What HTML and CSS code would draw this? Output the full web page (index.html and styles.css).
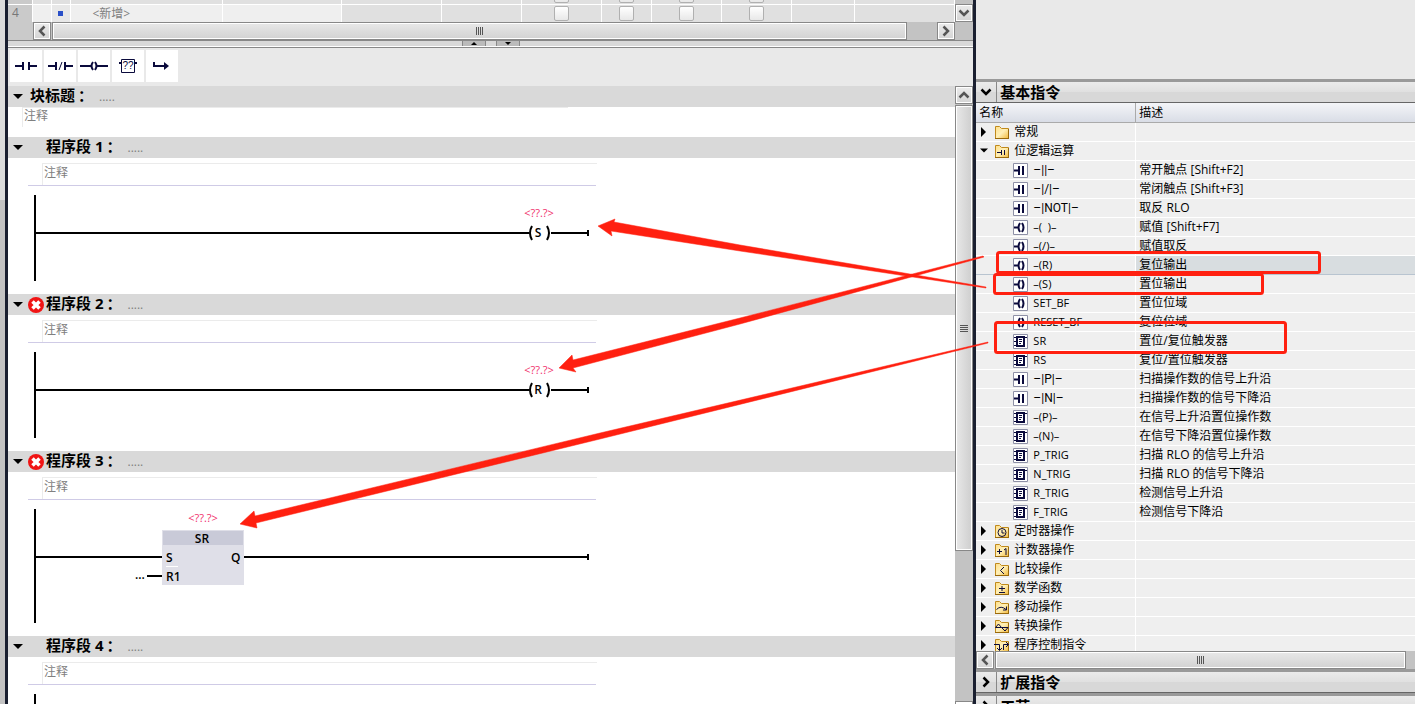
FILE: index.html
```html
<!DOCTYPE html>
<html lang="zh-CN">
<head>
    <meta charset="UTF-8">
    <meta name="viewport" content="width=device-width, initial-scale=1.0">
    <title>程序编辑器</title>
    <link rel="stylesheet" href="styles.css">
</head>
<body>
    <!-- shared icons -->
    <svg class="defs" aria-hidden="true">
        <defs>
            <linearGradient id="gold" x1="0" y1="0" x2="1" y2="1">
                <stop offset="0" stop-color="#ffdf8a"/>
                <stop offset="0.5" stop-color="#fff0b8"/>
                <stop offset="1" stop-color="#f2b93c"/>
            </linearGradient>
            <symbol id="folder" viewBox="0 0 16 15">
                <path d="M1.500 13.500V1.500H5.500L7.500 3.500H14.500V13.500Z" fill="url(#gold)" stroke="#c08a1c"/>
                <path d="M1 13.500H15M14.500 4V14" stroke="#99690c" fill="none"/>
            </symbol>
            <symbol id="contact" viewBox="0 0 15 15">
                <path d="M.5 .5H14.500V14.500H.5Z" fill="#fff" stroke="#8e90a6"/>
                <path d="M1 7.500H5M6 3V12M10 3V12" stroke="#0a0a3c" stroke-width="2" fill="none"/>
            </symbol>
            <symbol id="coil" viewBox="0 0 15 15">
                <path d="M.5 .5H14.500V14.500H.5Z" fill="#fff" stroke="#8e90a6"/>
                <path d="M1 7.500H5M7 3Q4 7.500 7 12M9 3Q12 7.500 9 12" stroke="#0a0a3c" stroke-width="2" fill="none"/>
            </symbol>
            <symbol id="block" viewBox="0 0 15 15">
                <path d="M.5 .5H14.500V14.500H.5Z" fill="#fff" stroke="#8e90a6"/>
                <path d="M4 3H11V12H4Z" stroke="#0a0a3c" stroke-width="2" fill="none"/>
                <path d="M1 3.500H4M1 7.500H4M1 11.500H4M11 3.500H14M6 5.500H9M6 7.500H9M6 9.500H8" stroke="#0a0a3c" fill="none"/>
            </symbol>
            <symbol id="left" viewBox="0 0 16 16"><path d="M10.500 3.500L6 8L10.500 12.500" fill="none" stroke="#555" stroke-width="2.500"/></symbol>
            <symbol id="right" viewBox="0 0 16 16"><path d="M5.500 3.500L10 8L5.500 12.500" fill="none" stroke="#555" stroke-width="2.500"/></symbol>
            <symbol id="up" viewBox="0 0 16 16"><path d="M3.500 10.500L8 6L12.500 10.500" fill="none" stroke="#555" stroke-width="2.500"/></symbol>
            <symbol id="down" viewBox="0 0 16 16"><path d="M3.500 5.500L8 10L12.500 5.500" fill="none" stroke="#555" stroke-width="2.500"/></symbol>
            <symbol id="open" viewBox="0 0 10 6"><path d="M0 0H10L5 5Z"/></symbol>
            <symbol id="closed" viewBox="0 0 8 10"><path d="M1 0L6 5L1 10Z"/></symbol>
            <symbol id="error" viewBox="0 0 16 16">
                <circle cx="8" cy="8" r="8" fill="#f01414"/>
                <path d="M4.500 4.500L11.500 11.500M11.500 4.500L4.500 11.500" stroke="#fff" stroke-width="3.500"/>
            </symbol>
        </defs>
    </svg>

    <div class="app">
        <div class="side"></div>

        <main class="editor">
            <div class="vars">
                <div class="vars-view">
                    <table class="vars-table">
                        <colgroup>
                            <col class="w24"><col class="w19"><col class="w19"><col class="w152"><col class="w119"><col class="w100"><col class="w80"><col class="w80"><col class="w50"><col class="w70"><col class="w70"><col class="w63"><col>
                        </colgroup>
                        <tr>
                            <th></th><td></td><td></td><td></td><td></td><td></td><td></td>
                            <td><input type="checkbox" aria-label="可访问"></td>
                            <td><input type="checkbox" aria-label="可写"></td>
                            <td><input type="checkbox" aria-label="可见"></td>
                            <td><input type="checkbox" aria-label="设定值"></td>
                            <td></td><td></td>
                        </tr>
                        <tr>
                            <th>4</th><td class="light"></td><td class="mark"><i></i></td><td class="light name">&lt;新增&gt;</td><td class="light"></td><td></td><td></td>
                            <td><input type="checkbox" aria-label="可访问"></td>
                            <td><input type="checkbox" aria-label="可写"></td>
                            <td><input type="checkbox" aria-label="可见"></td>
                            <td><input type="checkbox" aria-label="设定值"></td>
                            <td></td><td></td>
                        </tr>
                    </table>
                </div>
                <div class="vars-end"><button class="sb-btn" aria-label="向下"><svg><use href="#down"/></svg></button></div>
            </div>
            <div class="hscroll vars-scroll">
                <div class="row-head"></div>
                <button class="sb-btn" aria-label="向左"><svg><use href="#left"/></svg></button>
                <div class="thumb"><span class="grip"></span></div>
                <div class="track"></div>
                <button class="sb-btn" aria-label="向右"><svg><use href="#right"/></svg></button>
                <div class="corner"></div>
            </div>
            <div class="splitter">
                <button aria-label="上移"><svg width="6" height="3"><path d="M0 3L3 0L6 3Z"/></svg></button>
                <button aria-label="下移"><svg width="6" height="3"><path d="M0 0L3 3L6 0Z"/></svg></button>
            </div>

            <div class="toolbar">
                <button aria-label="常开触点"><svg width="32" height="32"><path d="M5 16H13M19 16H27M13 12V20M19 12V20" stroke-width="2"/></svg></button>
                <button aria-label="常闭触点"><svg width="32" height="32"><path d="M4 16H12M21 16H29M12 12V20M21 12V20" stroke-width="2"/><path d="M15 20L18 12"/></svg></button>
                <button aria-label="赋值"><svg width="32" height="32"><path d="M2 16H13M19 16H30M15 12Q12 16 15 20M17 12Q20 16 17 20" stroke-width="2"/></svg></button>
                <button aria-label="空功能框"><svg width="32" height="32"><path d="M9.500 9.500H22.500V22.500H9.500Z"/><path d="M7 13H9M23 13H25" stroke-width="2"/><text x="16" y="19" text-anchor="middle">??</text></svg></button>
                <button aria-label="打开分支"><svg width="32" height="32"><path d="M8 12V16H20" stroke-width="2"/><path d="M18 12L23 16L18 20Z" class="solid"/></svg></button>
            </div>

            <div class="work">
                <div class="networks">
                    <section class="block-title">
                        <header><button class="toggle" aria-label="折叠"><svg><use href="#open"/></svg></button><h2>块标题<span class="colon">：</span></h2><span class="dots">.....</span></header>
                        <input class="comment" placeholder="注释" aria-label="块注释">
                    </section>

                    <section class="network">
                        <header><button class="toggle" aria-label="折叠"><svg><use href="#open"/></svg></button><span class="state"></span><h2>程序段 1<span class="colon">：</span></h2><span class="dots">.....</span></header>
                        <input class="comment" placeholder="注释" aria-label="程序段 1 注释">
                        <svg class="ladder" width="562" height="86">
                            <path d="M1 0V86M2 38H495M517 38H554M554 35V41" class="wire"/>
                            <path d="M498 31Q494 38 498 45M513 31Q517 38 513 45" class="wire"/>
                            <text x="505" y="22" class="tag">&lt;??.?&gt;</text>
                            <text x="504" y="42" class="mid">S</text>
                        </svg>
                    </section>

                    <section class="network">
                        <header><button class="toggle" aria-label="折叠"><svg><use href="#open"/></svg></button><span class="state"><svg><use href="#error"/></svg></span><h2>程序段 2<span class="colon">：</span></h2><span class="dots">.....</span></header>
                        <input class="comment" placeholder="注释" aria-label="程序段 2 注释">
                        <svg class="ladder" width="562" height="86">
                            <path d="M1 0V86M2 38H495M517 38H554M554 35V41" class="wire"/>
                            <path d="M498 31Q494 38 498 45M513 31Q517 38 513 45" class="wire"/>
                            <text x="505" y="22" class="tag">&lt;??.?&gt;</text>
                            <text x="504" y="42" class="mid">R</text>
                        </svg>
                    </section>

                    <section class="network">
                        <header><button class="toggle" aria-label="折叠"><svg><use href="#open"/></svg></button><span class="state"><svg><use href="#error"/></svg></span><h2>程序段 3<span class="colon">：</span></h2><span class="dots">.....</span></header>
                        <input class="comment" placeholder="注释" aria-label="程序段 3 注释">
                        <svg class="ladder" width="562" height="114">
                            <path d="M1 0V114M2 48H128M210 48H554M554 45V51M113 67H128" class="wire"/>
                            <path d="M128 21H210V76H128Z" fill="#dfdfe8"/>
                            <path d="M129 22H209V36H129Z" fill="#c9cad8"/>
                            <path d="M132 57.500H144" stroke="#fff"/>
                            <text x="169" y="13" class="tag">&lt;??.?&gt;</text>
                            <text x="168" y="34" class="mid">SR</text>
                            <text x="132" y="53">S</text>
                            <text x="197" y="53">Q</text>
                            <text x="132" y="72">R1</text>
                            <text x="101" y="70">...</text>
                        </svg>
                    </section>

                    <section class="network">
                        <header><button class="toggle" aria-label="折叠"><svg><use href="#open"/></svg></button><span class="state"></span><h2>程序段 4<span class="colon">：</span></h2><span class="dots">.....</span></header>
                        <input class="comment" placeholder="注释" aria-label="程序段 4 注释">
                        <svg class="ladder" width="562" height="86">
                            <path d="M1 0V86M2 38H554" class="wire"/>
                        </svg>
                    </section>
                </div>
                <div class="vscroll">
                    <button class="sb-btn" aria-label="向上"><svg><use href="#up"/></svg></button>
                    <div class="thumb"><span class="grip"></span></div>
                    <div class="track"></div>
                    <div class="stub"></div>
                </div>
            </div>
        </main>

        <aside class="panel">
            <div class="panel-top"></div>
            <div class="bar"><button aria-label="折叠"><svg><use href="#down"/></svg></button><h2>基本指令</h2></div>
            <div class="tree">
                <table>
                    <thead><tr><th>名称</th><th>描述</th></tr></thead>
                    <tbody>
                        <tr><td><div class="group"><svg class="arrow"><use href="#closed"/></svg><svg class="folder"><use href="#folder"/></svg>常规</div></td><td></td></tr>
                        <tr><td><div class="group"><svg class="arrow down"><use href="#open"/></svg><svg class="folder"><use href="#folder"/><path d="M3 8.500H7M7.500 6V11M10.500 6V11"/></svg>位逻辑运算</div></td><td></td></tr>
                        <tr><td><div class="item sym"><svg><use href="#contact"/></svg>–||–</div></td><td>常开触点 [Shift+F2]</td></tr>
                        <tr><td><div class="item sym"><svg><use href="#contact"/></svg>–|/|–</div></td><td>常闭触点 [Shift+F3]</td></tr>
                        <tr><td><div class="item sym"><svg><use href="#contact"/></svg>–|NOT|–</div></td><td>取反 RLO</td></tr>
                        <tr><td><div class="item"><svg><use href="#coil"/></svg>–(&nbsp; )–</div></td><td>赋值 [Shift+F7]</td></tr>
                        <tr><td><div class="item"><svg><use href="#coil"/></svg>–(/)–</div></td><td>赋值取反</td></tr>
                        <tr class="selected"><td><div class="item"><svg><use href="#coil"/></svg>–(R)</div></td><td>复位输出</td></tr>
                        <tr><td><div class="item"><svg><use href="#coil"/></svg>–(S)</div></td><td>置位输出</td></tr>
                        <tr><td><div class="item"><svg><use href="#coil"/></svg>SET_BF</div></td><td>置位位域</td></tr>
                        <tr><td><div class="item"><svg><use href="#coil"/></svg>RESET_BF</div></td><td>复位位域</td></tr>
                        <tr><td><div class="item"><svg><use href="#block"/></svg>SR</div></td><td>置位/复位触发器</td></tr>
                        <tr><td><div class="item"><svg><use href="#block"/></svg>RS</div></td><td>复位/置位触发器</td></tr>
                        <tr><td><div class="item sym"><svg><use href="#contact"/></svg>–|P|–</div></td><td>扫描操作数的信号上升沿</td></tr>
                        <tr><td><div class="item sym"><svg><use href="#contact"/></svg>–|N|–</div></td><td>扫描操作数的信号下降沿</td></tr>
                        <tr><td><div class="item"><svg><use href="#block"/></svg>–(P)–</div></td><td>在信号上升沿置位操作数</td></tr>
                        <tr><td><div class="item"><svg><use href="#block"/></svg>–(N)–</div></td><td>在信号下降沿置位操作数</td></tr>
                        <tr><td><div class="item"><svg><use href="#block"/></svg>P_TRIG</div></td><td>扫描 RLO 的信号上升沿</td></tr>
                        <tr><td><div class="item"><svg><use href="#block"/></svg>N_TRIG</div></td><td>扫描 RLO 的信号下降沿</td></tr>
                        <tr><td><div class="item"><svg><use href="#block"/></svg>R_TRIG</div></td><td>检测信号上升沿</td></tr>
                        <tr><td><div class="item"><svg><use href="#block"/></svg>F_TRIG</div></td><td>检测信号下降沿</td></tr>
                        <tr><td><div class="group"><svg class="arrow"><use href="#closed"/></svg><svg class="folder"><use href="#folder"/><circle cx="8" cy="8.500" r="4"/><path d="M8 6V9H10.500"/></svg>定时器操作</div></td><td></td></tr>
                        <tr><td><div class="group"><svg class="arrow"><use href="#closed"/></svg><svg class="folder"><use href="#folder"/><path d="M3 8.500H8M5.500 6V11M10 7L12 5.500V12"/></svg>计数器操作</div></td><td></td></tr>
                        <tr><td><div class="group"><svg class="arrow"><use href="#closed"/></svg><svg class="folder"><use href="#folder"/><path d="M10 5L6.500 8.500L10 12"/></svg>比较操作</div></td><td></td></tr>
                        <tr><td><div class="group"><svg class="arrow"><use href="#closed"/></svg><svg class="folder"><use href="#folder"/><path d="M5 7.500H11M8 5V10M5 11.500H11"/></svg>数学函数</div></td><td></td></tr>
                        <tr><td><div class="group"><svg class="arrow"><use href="#closed"/></svg><svg class="folder"><use href="#folder"/><path d="M2.500 9.500Q7 5 12 9.500M12.500 6.500V10H9"/></svg>移动操作</div></td><td></td></tr>
                        <tr><td><div class="group"><svg class="arrow"><use href="#closed"/></svg><svg class="folder"><use href="#folder"/><path d="M1.500 8.500L4.500 5L7.500 8.500ZM7.500 8.500H14L11 12Z"/></svg>转换操作</div></td><td></td></tr>
                        <tr><td><div class="group"><svg class="arrow"><use href="#closed"/></svg><svg class="folder"><use href="#folder"/><path d="M0 6.500H5.500V12M3 10L5.500 12.500L8 10M9.500 12V6.500H14M12 4L14.500 6.500L12 9"/></svg>程序控制指令</div></td><td></td></tr>
                    </tbody>
                </table>
            </div>
            <div class="hscroll">
                <button class="sb-btn" aria-label="向左"><svg><use href="#left"/></svg></button>
                <div class="thumb"><span class="grip"></span></div>
                <div class="track"></div>
            </div>
            <div class="bar"><button aria-label="展开"><svg><use href="#right"/></svg></button><h2>扩展指令</h2></div>
            <div class="bar last"><button aria-label="展开"><svg><use href="#right"/></svg></button><h2>工艺</h2></div>
        </aside>
    </div>

    <!-- red marks over the two panes -->
    <svg class="marks" aria-hidden="true">
        <g fill="none" stroke="#ff2010" stroke-width="3">
            <rect x="997.500" y="252.500" width="322" height="20" rx="2"/>
            <rect x="994.500" y="274.500" width="268" height="19" rx="2"/>
            <rect x="995.500" y="322.500" width="290" height="30" rx="2"/>
        </g>
        <g fill="#ff2010" stroke="#ff2010" stroke-width=".5">
            <path d="M598 226L615 219L614 222L740 245L986 287V288L740 251L611 231L612 236Z"/>
            <path d="M559 368L572 355L573 360L740 318L983 256L984 257L740 324L573 368L576 372Z"/>
            <path d="M240 524L254 511L255 516L600 433L988 342V343L600 439L256 523L257 528Z"/>
        </g>
    </svg>
</body>
</html>
```

FILE: styles.css
```css
* {
    box-sizing: border-box;
}

body {
    margin: 0;
    font-family: "Open Sans", "Noto Sans CJK SC", sans-serif;
    font-size: 12px;
    color: #000;
    position: relative;
    overflow: hidden;
}

button {
    padding: 0;
    border: none;
    background: none;
}

svg {
    display: block;
    flex: none;
}

h2 {
    margin: 0;
    font-size: 15px;
    line-height: 20px;
    font-weight: bold;
    white-space: nowrap;
}

.defs {
    position: absolute;
    width: 0;
    height: 0;
}

.app {
    display: flex;
    height: 100vh;
    overflow: hidden;
}

.side {
    width: 8px;
    background: linear-gradient(#dcdcdc 200px, #c3c3c3 200px);
    border-right: 3px solid #1a1f30;
}

.editor {
    flex: 1;
    min-width: 0;
    display: flex;
    flex-direction: column;
    background: #fff;
    border-right: 3px solid #1a1f30;
}

/* variable table */
.vars {
    display: flex;
    height: 22px;
}

.vars-view {
    flex: 1;
    min-width: 0;
    display: flex;
    align-items: flex-end;
    overflow: hidden;
}

.vars-table {
    width: 100%;
    table-layout: fixed;
    border-collapse: collapse;
    flex: none;
}

.vars-table tr {
    height: 18px;
}

.vars-table th,
.vars-table td {
    padding: 0;
    height: 18px;
    line-height: 16px;
    border-top: 1px solid #fff;
    border-right: 1px solid #fff;
    background: #e0e0e0;
    text-align: center;
}

.vars-table th {
    background: #cacaca;
    color: #777;
    font-weight: normal;
    text-align: left;
    padding-left: 4px;
}

.vars-table .light {
    background: #efefef;
}

.vars-table .name {
    color: #808080;
    text-align: left;
    padding: 1px 0 0 22px;
}

.vars-table .mark {
    background: #e8e8e8;
}

.mark i {
    display: block;
    width: 5px;
    height: 5px;
    margin: 0 auto;
    background: #2a50c8;
}

.vars-table input {
    appearance: none;
    display: block;
    width: 15px;
    height: 15px;
    margin: 1px auto;
    border: 1px solid #b0b0b0;
    border-radius: 2px;
    background: linear-gradient(#fff, #e8e8e8);
}

.w19 { width: 19px; }
.w24 { width: 24px; }
.w50 { width: 50px; }
.w63 { width: 63px; }
.w70 { width: 70px; }
.w80 { width: 80px; }
.w100 { width: 100px; }
.w119 { width: 119px; }
.w152 { width: 152px; }

.vars-end {
    width: 18px;
    padding-top: 4px;
    background: #c3c3c3;
}

/* scrollbars */
.sb-btn {
    flex: none;
    width: 18px;
    height: 18px;
    display: flex;
    align-items: center;
    justify-content: center;
    border: 1px solid #888;
    box-shadow: inset 0 0 0 1px #fff;
    background: linear-gradient(#ececec, #d4d4d4);
}

.sb-btn svg {
    width: 16px;
    height: 16px;
}

.hscroll {
    flex: none;
    display: flex;
    height: 18px;
    background: #c3c3c3;
}

.thumb {
    display: flex;
    align-items: center;
    justify-content: center;
    border: 1px solid #888;
    box-shadow: inset 0 0 0 1px #fff;
    background: linear-gradient(#e8e8e8, #d2d2d2);
}

.hscroll .thumb {
    flex: 1;
    margin-left: 1px;
}

.hscroll .grip {
    width: 7px;
    height: 8px;
    background: repeating-linear-gradient(90deg, #555 0 1px, transparent 1px 2px);
}

.vars-scroll .track {
    width: 30px;
}

.row-head {
    width: 25px;
    background: #cacaca;
}

.corner {
    width: 18px;
}

.panel .hscroll .track {
    width: 9px;
}

.splitter {
    flex: none;
    height: 8px;
    display: flex;
    justify-content: center;
    gap: 10px;
    border-top: 1px solid #888;
    border-bottom: 1px solid #888;
    box-shadow: inset 0 -1px 0 #fff;
    background: #d9d9d9;
}

.splitter button {
    width: 24px;
    height: 5px;
    display: flex;
    justify-content: center;
    align-items: center;
    border: 1px solid #888;
    border-width: 0 1px;
    background: #bbb;
}

.toolbar {
    flex: none;
    display: flex;
    gap: 2px;
    height: 38px;
    padding: 2px;
    background: #e9e9e9;
}

.toolbar button {
    width: 32px;
    height: 32px;
    background: #fff;
}

.toolbar path {
    fill: none;
    stroke: #0a0a3c;
}

.toolbar .solid {
    fill: #0a0a3c;
    stroke: none;
}

.toolbar text {
    font-size: 10px;
    fill: #0a0a3c;
}

/* networks */
.work {
    flex: 1;
    min-height: 0;
    display: flex;
}

.networks {
    flex: 1;
    min-width: 0;
    overflow: hidden;
}

.networks header {
    display: flex;
    align-items: center;
    height: 21px;
    padding-left: 5px;
    background: #d9d9d9;
}

.networks h2 {
    padding-bottom: 4px;
}

.toggle {
    width: 15px;
}

.toggle svg {
    width: 10px;
    height: 6px;
}

.state {
    width: 16px;
}

.state svg {
    width: 16px;
    height: 16px;
}

.colon {
    margin-left: 3px;
}

.dots {
    margin-left: 6px;
    padding-bottom: 1px;
    color: #808080;
}

.comment {
    display: block;
    width: 546px;
    height: 20px;
    padding: 0 1px 4px;
    border: 1px solid #ebebeb;
    border-width: 1px 0 0 1px;
    font: inherit;
    line-height: 16px;
    background: #fff;
}

.comment::placeholder {
    color: #808080;
    opacity: 1;
}

.block-title {
    height: 51px;
}

.block-title h2 {
    margin-left: 2px;
}

.block-title .comment {
    margin-left: 14px;
}

.network .state {
    margin-right: 2px;
}

.network .comment {
    width: 555px;
    height: 22px;
    margin: 5px 0 0 34px;
    padding-bottom: 5px;
}

.ladder {
    box-sizing: content-box;
    margin: 0 0 13px 20px;
    padding: 9px 0 0 6px;
    border-top: 1px solid #cfcbe6;
}

.wire {
    fill: none;
    stroke: #000;
    stroke-width: 2;
}

.ladder text {
    font-size: 12px;
    font-weight: 600;
}

.ladder .mid {
    text-anchor: middle;
}

.ladder .tag {
    font-size: 11px;
    font-weight: normal;
    fill: #f0306c;
    text-anchor: middle;
}

.vscroll {
    width: 18px;
    display: flex;
    flex-direction: column;
    background: #c3c3c3;
}

.vscroll .thumb {
    flex: 1;
    margin-top: 1px;
    background: linear-gradient(90deg, #e8e8e8, #cecece);
}

.vscroll .grip {
    width: 8px;
    height: 7px;
    background: repeating-linear-gradient(#555 0 1px, transparent 1px 2px);
}

.vscroll .track {
    height: 150px;
}

.stub {
    height: 3px;
    border: 1px solid #888;
    border-bottom: none;
    background: #fff;
}

/* instruction panel */
.panel {
    width: 31%;
    display: flex;
    flex-direction: column;
    background: #efefef;
}

.panel-top {
    flex: none;
    height: 79px;
    background: #e9e9e9;
}

.bar {
    flex: none;
    display: flex;
    height: 24px;
    border-top: 3px solid #9a9a9a;
    border-bottom: 1px solid #666;
    background: linear-gradient(#ebebeb, #e0e0e0 50%, #d8d8d8 50%);
}

/* runs past the window's lower edge */
.bar.last {
    margin-bottom: -13px;
}

.bar button {
    width: 21px;
    padding-left: 2px;
    border-right: 1px solid #888;
}

.bar svg {
    width: 16px;
    height: 16px;
}

.bar svg use {
    filter: brightness(0);
}

.bar h2 {
    padding-left: 3px;
}

.tree {
    flex: 1;
    min-height: 0;
    overflow: hidden;
}

.tree table {
    width: 100%;
    table-layout: fixed;
    border-collapse: separate;
    border-spacing: 0;
}

.tree th,
.tree td {
    height: 19px;
    padding: 0 0 0 3px;
    line-height: 18px;
    text-align: left;
    white-space: nowrap;
    border-bottom: 1px solid #fff;
}

.tree th {
    height: 20px;
    font-weight: normal;
    border-bottom: 1px solid #aaa;
    background: linear-gradient(#f4f5f8, #d9dde6);
}

.tree th:first-child {
    width: 160px;
    border-right: 1px solid #aaa;
}

.tree td:first-child {
    border-right: 1px solid #fff;
}

.tree .selected td {
    border-bottom-color: #b8c4d0;
}

.tree .selected td:last-child {
    background: #d8dde0;
}

.group,
.item {
    display: flex;
    align-items: center;
    height: 18px;
}

.item {
    gap: 5px;
    padding-left: 34px;
    font-size: 11px;
}

.item.sym {
    font-family: Roboto, sans-serif;
    font-size: 12px;
}

.item svg {
    width: 15px;
    height: 15px;
}

.arrow {
    width: 8px;
    height: 10px;
    margin: 0 6px 0 1px;
}

.arrow.down {
    height: 6px;
}

.folder {
    width: 16px;
    height: 15px;
    margin-right: 4px;
}

.folder > path,
.folder > circle {
    fill: none;
    stroke: #0a0a3c;
}

.marks {
    position: absolute;
    top: 0;
    left: 0;
    width: 100%;
    height: 100%;
    pointer-events: none;
}
```
